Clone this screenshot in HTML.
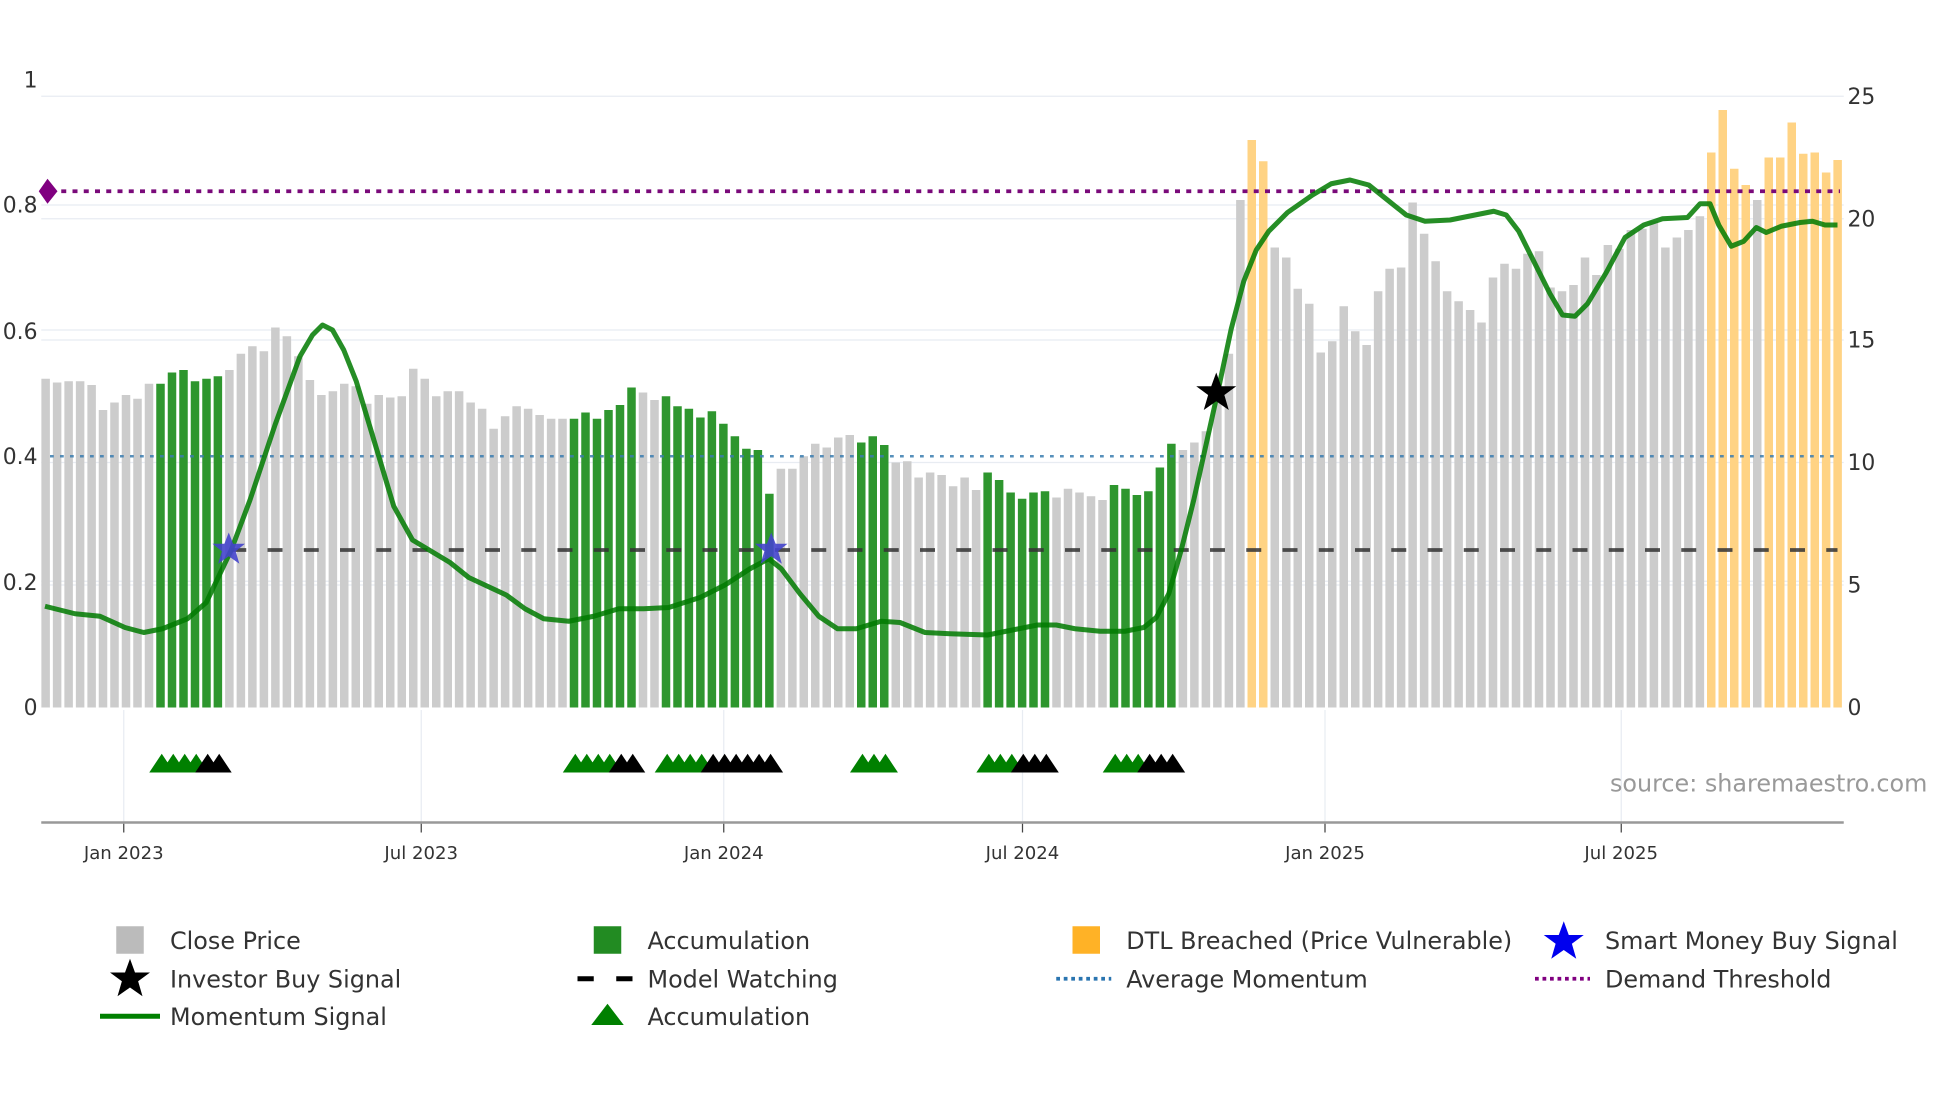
<!DOCTYPE html>
<html><head><meta charset="utf-8"><style>
html,body{margin:0;padding:0;background:#fff;width:1960px;height:1102px;overflow:hidden}
svg{display:block}
text{font-family:"DejaVu Sans","Liberation Sans",sans-serif}
</style></head><body>
<svg id="s" width="1960" height="1102" viewBox="0 0 1568 881.6" xmlns="http://www.w3.org/2000/svg">
<g stroke="#e8ecf2" stroke-width="1">
<line x1="33" x2="1475" y1="77" y2="77"/><line x1="33" x2="1475" y1="175" y2="175"/><line x1="33" x2="1475" y1="272" y2="272"/><line x1="33" x2="1475" y1="370" y2="370"/><line x1="33" x2="1475" y1="468" y2="468"/>
<line x1="33" x2="1475" y1="164" y2="164"/><line x1="33" x2="1475" y1="264" y2="264"/><line x1="33" x2="1475" y1="465" y2="465"/>
<line x1="99" x2="99" y1="568" y2="658"/><line x1="337" x2="337" y1="568" y2="658"/><line x1="579" x2="579" y1="568" y2="658"/><line x1="818" x2="818" y1="568" y2="658"/><line x1="1060" x2="1060" y1="568" y2="658"/><line x1="1297" x2="1297" y1="568" y2="658"/>
</g>
<g id="bars"></g>
<line x1="40" x2="1472" y1="365" y2="365" stroke="#3a7db0" stroke-width="2" stroke-dasharray="3,5" opacity="0.85"/>
<line x1="40" x2="1472" y1="153" y2="153" stroke="#7a0a7a" stroke-width="3" stroke-dasharray="4,5"/>
<polygon points="38,143 46,153 38,163 31,153" fill="#800080"/>
<line x1="185" x2="1470" y1="440" y2="440" stroke="#333" stroke-width="3" stroke-dasharray="12,17" opacity="0.85"/>
<polyline fill="none" stroke="#007a00" stroke-width="4" stroke-linejoin="round" opacity="0.85" points="36,485 60,491 80,493 100,502 115,506 130,503 150,495 165,482 185,440 200,400 220,340 240,285 250,268 258,260 266,264 275,280 285,305 300,355 315,405 330,432 345,441 360,450 375,462 390,469 405,476 420,487 435,495 455,497 475,493 495,487 515,487 535,486 560,478 580,468 600,455 615,447 625,455 640,475 655,493 670,503 685,503 705,497 720,498 740,506 760,507 790,508 810,504 830,500 845,500 860,503 880,505 900,505 915,502 925,494 935,475 945,440 955,400 965,355 975,310 985,263 995,225 1005,200 1015,185 1030,170 1050,156 1065,147 1080,144 1095,148 1110,160 1125,172 1140,177 1160,176 1180,172 1195,169 1205,172 1215,185 1225,205 1240,235 1250,252 1260,253 1270,243 1285,218 1300,190 1315,180 1330,175 1350,174 1360,163 1368,163 1375,180 1385,197 1395,193 1405,182 1413,186 1425,181 1440,178 1450,177 1460,180 1470,180"/>
<g id="tri"></g>
<polygon fill="#4444cc" opacity="0.9" points="183,426 186.5,435 196,435 188.5,441 191.5,451 183,445 174.5,451 177.5,441 170,435 179.5,435"/>
<polygon fill="#4444cc" opacity="0.9" points="617,426 620.5,435 630,435 622.5,441 625.5,451 617,445 608.5,451 611.5,441 604,435 613.5,435"/>
<polygon fill="#000" points="973,298 977,309 989,309 979.5,316 983,328 973,321 963,328 966.5,316 957,309 969,309"/>
<line x1="33" x2="1475" y1="658" y2="658" stroke="#999" stroke-width="2"/>
<g stroke="#444" stroke-width="1"><line x1="99" x2="99" y1="659" y2="666"/><line x1="337" x2="337" y1="659" y2="666"/><line x1="579" x2="579" y1="659" y2="666"/><line x1="818" x2="818" y1="659" y2="666"/><line x1="1060" x2="1060" y1="659" y2="666"/><line x1="1297" x2="1297" y1="659" y2="666"/></g>
<g font-size="14.5" fill="#333" text-anchor="middle"><text x="99" y="687">Jan 2023</text><text x="337" y="687">Jul 2023</text><text x="579" y="687">Jan 2024</text><text x="818" y="687">Jul 2024</text><text x="1060" y="687">Jan 2025</text><text x="1297" y="687">Jul 2025</text></g>
<g font-size="17.5" fill="#333" text-anchor="end"><text x="30" y="70">1</text><text x="30" y="170">0.8</text><text x="30" y="271">0.6</text><text x="30" y="371">0.4</text><text x="30" y="472">0.2</text><text x="30" y="572">0</text></g>
<g font-size="17.5" fill="#333"><text x="1478" y="83">25</text><text x="1478" y="181">20</text><text x="1478" y="278">15</text><text x="1478" y="376">10</text><text x="1478" y="474">5</text><text x="1478" y="572">0</text></g>
<text x="1288" y="633" font-size="19.1" fill="#999">source: sharemaestro.com</text>
<g font-size="19.1" fill="#333">
<rect x="93" y="741" width="22" height="22" fill="#bbb"/><text x="136" y="759">Close Price</text>
<rect x="475" y="741" width="22" height="22" fill="#228b22"/><text x="518" y="759">Accumulation</text>
<rect x="858" y="741" width="22" height="22" fill="#ffa500" opacity="0.85"/><text x="901" y="759">DTL Breached (Price Vulnerable)</text>
<polygon fill="#0000ee" points="1251,737 1255,748 1267,748 1257.5,755 1261,767 1251,760 1241,767 1244.5,755 1235,748 1247,748"/><text x="1284" y="759">Smart Money Buy Signal</text>
<polygon fill="#000" points="104,767 108,778 120,778 110.5,785 114,797 104,790 94,797 97.5,785 88,778 100,778"/><text x="136" y="790">Investor Buy Signal</text>
<line x1="462" x2="506" y1="783" y2="783" stroke="#000" stroke-width="4" stroke-dasharray="13,18"/><text x="518" y="790">Model Watching</text>
<line x1="845" x2="889" y1="783" y2="783" stroke="#2a75b0" stroke-width="3" stroke-dasharray="3,3"/><text x="901" y="790">Average Momentum</text>
<line x1="1228" x2="1272" y1="783" y2="783" stroke="#800080" stroke-width="3" stroke-dasharray="3,3"/><text x="1284" y="790">Demand Threshold</text>
<line x1="80" x2="128" y1="813" y2="813" stroke="#008000" stroke-width="4"/><text x="136" y="820">Momentum Signal</text>
<polygon fill="#008000" points="486,803 499,820 473,820"/><text x="518" y="820">Accumulation</text>
</g>
</svg>
<script>
var tops=[303,306,305,305,308,328,322,316,319,307,307,298,296,305,303,301,296,283,277,281,262,269,285,304,316,313,307,309,323,316,318,317,295,303,317,313,313,322,327,343,333,325,327,332,335,335,335,330,335,328,324,310,314,320,317,325,327,334,329,339,349,359,360,395,375,375,365,355,358,350,348,354,349,356,370,369,382,378,380,389,382,392,378,384,394,399,394,393,398,391,394,397,400,388,391,396,393,374,355,360,354,345,318,283,160,112,129,198,206,231,243,282,273,245,265,276,233,215,214,162,187,209,233,241,248,258,222,211,215,203,201,230,233,228,206,220,196,199,184,183,177,198,190,184,173,122,88,135,148,160,126,126,98,123,122,138,128];
function col(i){if((i>=10&&i<=15)||(i>=46&&i<=51)||(i>=54&&i<=63)||(i>=71&&i<=73)||(i>=82&&i<=87)||(i>=93&&i<=98))return"#2e962e";if(i==105||i==106||(i>=145&&i<=156&&i!=149))return"#ffd384";return"#cccccc";}
var h="";for(var i=0;i<tops.length;i++){var x=36.5+9.19*i-3.4;h+='<rect x="'+x.toFixed(1)+'" y="'+tops[i]+'" width="6.8" height="'+(566-tops[i])+'" fill="'+col(i)+'"/>';}
document.getElementById("bars").innerHTML=h;
var g=[[10,13,"#008000"],[14,15,"#000"],[46,49,"#008000"],[50,51,"#000"],[54,57,"#008000"],[58,63,"#000"],[71,73,"#008000"],[82,84,"#008000"],[85,87,"#000"],[93,95,"#008000"],[96,98,"#000"]];
var t="";g.forEach(function(a){for(var i=a[0];i<=a[1];i++){var x=36.5+9.19*i+1;t+='<polygon fill="'+a[2]+'" points="'+(x-10)+',618 '+x+',603 '+(x+10)+',618"/>';}});
document.getElementById("tri").innerHTML=t;
</script>
</body></html>
